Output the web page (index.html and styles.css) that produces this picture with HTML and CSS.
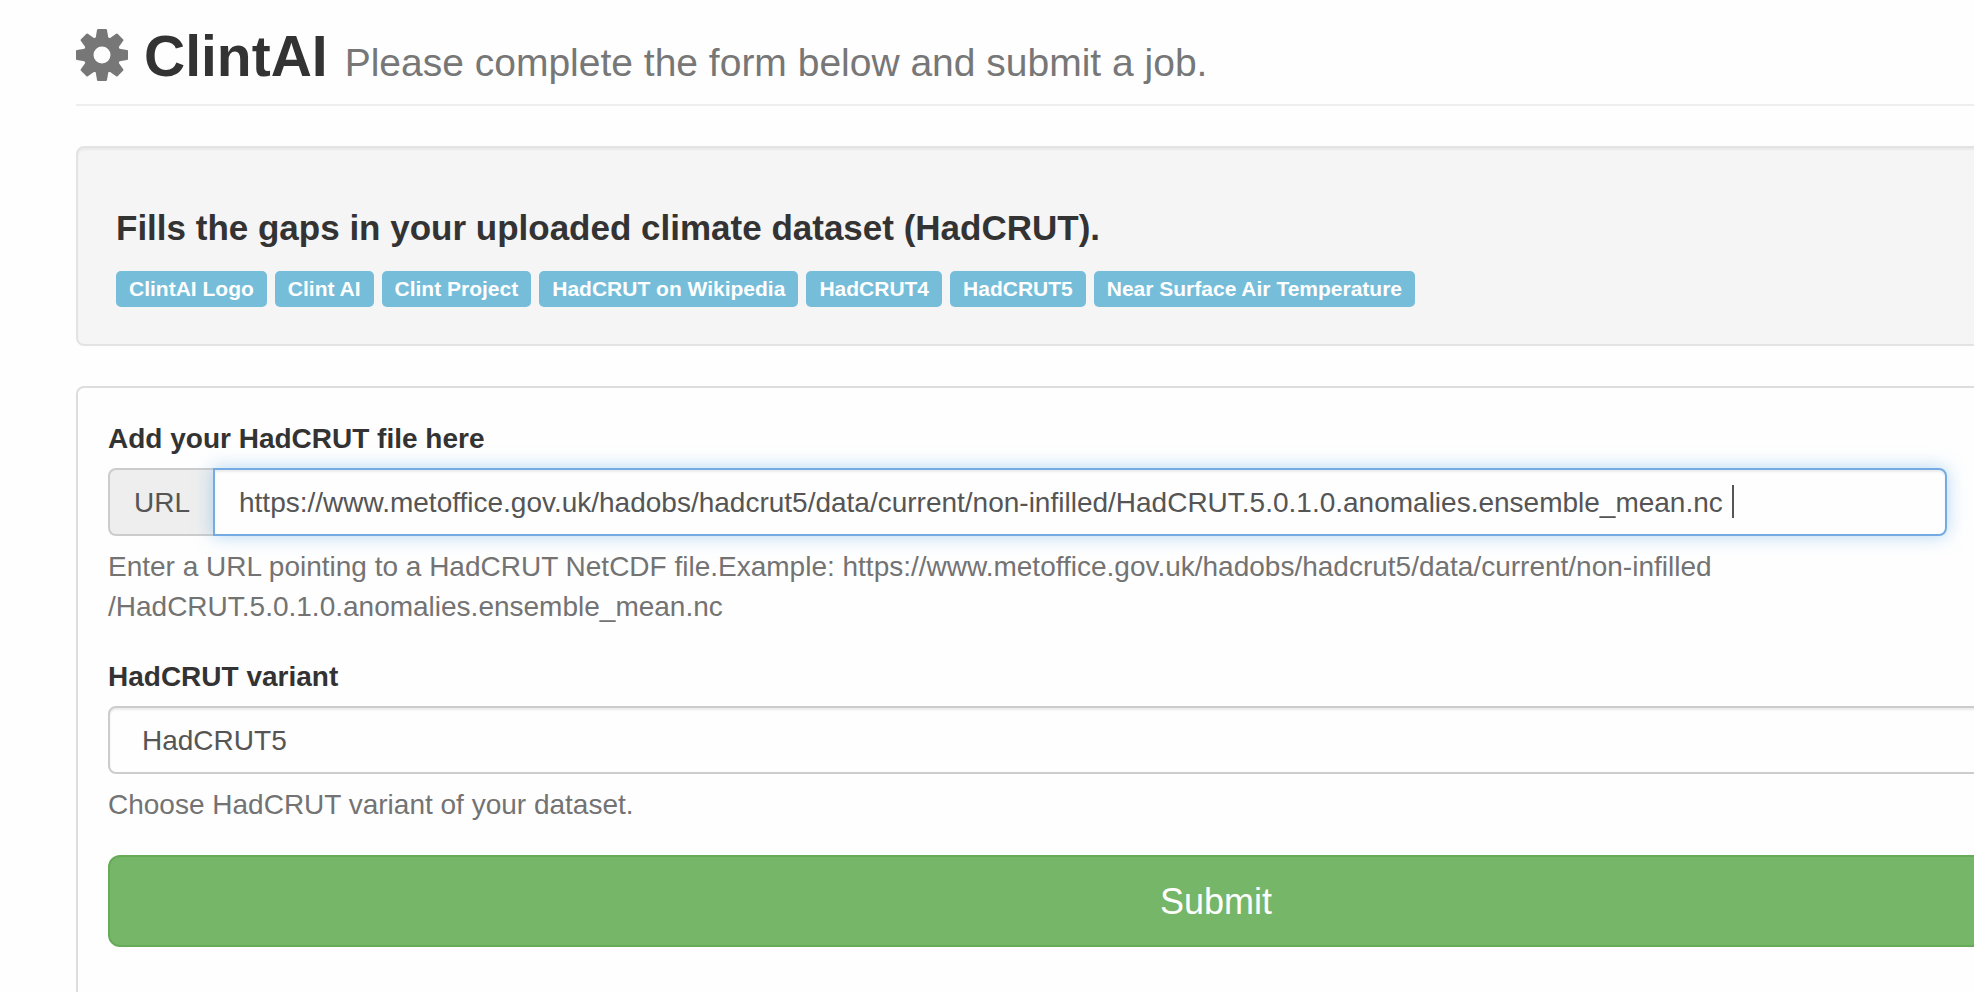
FILE: index.html
```html
<!DOCTYPE html>
<html lang="en">
<head>
<meta charset="utf-8">
<title>ClintAI</title>
<link rel="stylesheet" href="styles.css">
</head>
<body>
<main class="container">
  <header class="page-header">
    <svg class="cog" viewBox="-26 -26 52 52" aria-hidden="true">
      <defs><path id="tooth" d="M-6.500-16L-5-25Q-4.800-26-4-26H4Q4.800-26 5-25L6.500-16Z"/></defs>
      <circle r="13.500" fill="none" stroke="#777" stroke-width="10"/>
      <g fill="#777">
        <use href="#tooth"/>
        <use href="#tooth" transform="rotate(45)"/>
        <use href="#tooth" transform="rotate(90)"/>
        <use href="#tooth" transform="rotate(135)"/>
        <use href="#tooth" transform="rotate(180)"/>
        <use href="#tooth" transform="rotate(225)"/>
        <use href="#tooth" transform="rotate(270)"/>
        <use href="#tooth" transform="rotate(315)"/>
      </g>
    </svg>
    <h1 class="title">ClintAI</h1>
    <p class="subtitle">Please complete the form below and submit a job.</p>
  </header>

  <section class="well">
    <h2 class="well-title">Fills the gaps in your uploaded climate dataset (HadCRUT).</h2>
    <nav class="labels">
      <a class="label" href="#">ClintAI Logo</a>
      <a class="label" href="#">Clint AI</a>
      <a class="label" href="#">Clint Project</a>
      <a class="label" href="#">HadCRUT on Wikipedia</a>
      <a class="label" href="#">HadCRUT4</a>
      <a class="label" href="#">HadCRUT5</a>
      <a class="label" href="#">Near Surface Air Temperature</a>
    </nav>
  </section>

  <form class="panel">
    <div class="form-group form-group-url">
      <label class="control-label" for="url">Add your HadCRUT file here</label>
      <div class="input-group">
        <span class="addon">URL</span>
        <input class="control control-active" id="url" type="text" value="https://www.metoffice.gov.uk/hadobs/hadcrut5/data/current/non-infilled/HadCRUT.5.0.1.0.anomalies.ensemble_mean.nc ">
        <span class="caret"></span>
      </div>
      <p class="help">Enter a URL pointing to a HadCRUT NetCDF file.Example: https://www.metoffice.gov.uk/hadobs/hadcrut5/data/current/non-infilled<br>/HadCRUT.5.0.1.0.anomalies.ensemble_mean.nc</p>
    </div>
    <div class="form-group">
      <label class="control-label" for="variant">HadCRUT variant</label>
      <select class="control variant" id="variant">
        <option>HadCRUT5</option>
      </select>
      <p class="help">Choose HadCRUT variant of your dataset.</p>
    </div>
    <button class="submit" type="button">Submit</button>
  </form>
</main>
</body>
</html>
```

FILE: styles.css
```css
* { box-sizing: border-box; }

body {
  margin: 0;
  min-height: 100vh;
  overflow: hidden;
  background: #fefefe;
  color: #333;
  font-family: "Liberation Sans", Arial, sans-serif;
  font-size: 28px;
  line-height: 40px;
}

h1, h2, p { margin: 0; }

/* The content column runs on past the right edge of the window. */
.container {
  margin-left: 76px;
  margin-right: -382px;
}

.page-header {
  display: flex;
  align-items: baseline;
  height: 106px;
  padding-top: 23px;
  border-bottom: 2px solid #eee;
}

.cog {
  width: 52px;
  height: 52px;
  margin-right: 16px;
  align-self: flex-start;
  margin-top: 6px;
}

.title {
  margin-right: 17px;
  font-size: 57px;
  line-height: 66px;
}

.subtitle {
  color: #777;
  font-size: 39px;
}

.well {
  margin-top: 40px;
  padding: 60px 38px 37px;
  border: 2px solid #e3e3e3;
  border-radius: 8px;
  background: #f5f5f5;
  box-shadow: inset 0 2px 2px rgba(0, 0, 0, .05);
}

.well-title {
  font-size: 35px;
  line-height: 40px;
}

.labels {
  display: flex;
  gap: 8px;
  margin-top: 23px;
}

.label {
  padding: 0 13px;
  border-radius: 5px;
  background: #75bdd9;
  color: #fff;
  font-size: 21px;
  font-weight: bold;
  line-height: 36px;
  text-decoration: none;
  white-space: nowrap;
}

.panel {
  min-height: 640px;
  margin-top: 40px;
  padding: 31px 30px 30px;
  border: 2px solid #ddd;
  border-radius: 8px;
  background: #fefefe;
}

.form-group { margin-bottom: 30px; }
.form-group-url { width: 83%; }

.control-label {
  display: block;
  margin-bottom: 9px;
  font-weight: bold;
}

.input-group {
  position: relative;
  display: flex;
}

.addon {
  padding: 13px 23px 11px 24px;
  border: 2px solid #ccc;
  border-right: 0;
  border-radius: 8px 0 0 8px;
  background: #eee;
  color: #555;
}

.control {
  width: 100%;
  height: 68px;
  padding: 13px 24px 11px;
  border: 2px solid #ccc;
  border-radius: 8px;
  outline: 0;
  background: #fefefe;
  box-shadow: inset 0 2px 2px rgba(0, 0, 0, .075);
  color: #555;
  font: inherit;
}

.control-active {
  flex: 1;
  min-width: 0;
  border-color: #74abe3;
  border-radius: 0 8px 8px 0;
  box-shadow: inset 0 2px 2px rgba(0, 0, 0, .075), 0 0 18px rgba(102, 175, 233, .5);
}

.caret {
  position: absolute;
  top: 17px;
  left: 1624px;
  width: 2px;
  height: 33px;
  background: #555;
}

.variant {
  display: block;
  padding-left: 32px;
  appearance: none;
}

.help {
  margin-top: 11px;
  color: #737373;
}

.submit {
  display: block;
  width: 100%;
  height: 92px;
  padding: 2px 0 0;
  border: 2px solid #67ab58;
  border-radius: 12px;
  background: #76b668;
  color: #fff;
  font: inherit;
  font-size: 36px;
}
```
